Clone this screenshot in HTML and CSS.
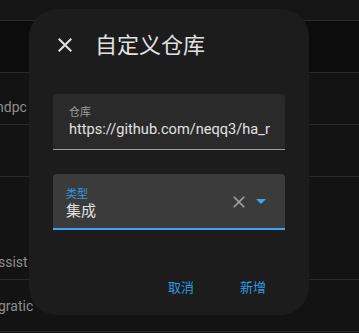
FILE: index.html
```html
<!DOCTYPE html>
<html lang="zh">
<head>
    <meta charset="UTF-8">
    <meta name="viewport" content="width=device-width, initial-scale=1.0">
    <title>自定义仓库</title>
    <link rel="stylesheet" href="styles.css">
</head>
<body>
    <!-- Pàgina de fons -->
    <div class="page">
        <div class="topbar"></div>
        <div class="toolbar"></div>
        <div class="list-row"><span class="row-text">ndpc</span></div>
        <div class="list-row"></div>
        <div class="list-row tall"><span class="row-text">ssist</span></div>
        <div class="list-row"><span class="row-text">gratic</span></div>
    </div>

    <!-- Diàleg -->
    <div class="dialog">
        <div class="dialog-header">
            <button class="icon-btn" type="button">
                <svg viewBox="0 0 24 24" width="24" height="24"><path fill="#e1e1e1" d="M19,6.41L17.59,5L12,10.59L6.41,5L5,6.41L10.59,12L5,17.59L6.41,19L12,13.41L17.59,19L19,17.59L13.41,12L19,6.41Z"/></svg>
            </button>
            <h2 class="dialog-title">自定义仓库</h2>
        </div>

        <div class="field">
            <span class="field-label">仓库</span>
            <span class="field-value">https://github.com/neqq3/ha_node_red_addon</span>
        </div>

        <div class="field select">
            <div class="select-text">
                <span class="field-label">类型</span>
                <span class="field-value">集成</span>
            </div>
            <svg class="clear-icon" viewBox="0 0 24 24" width="20" height="20"><path fill="#9e9e9e" d="M19,6.41L17.59,5L12,10.59L6.41,5L5,6.41L10.59,12L5,17.59L6.41,19L12,13.41L17.59,19L19,17.59L13.41,12L19,6.41Z"/></svg>
            <svg class="arrow-icon" viewBox="0 0 24 24" width="24" height="24"><path fill="#3ca6f2" d="M7 10l5 5 5-5z"/></svg>
        </div>

        <div class="dialog-actions">
            <button class="text-btn" type="button">取消</button>
            <button class="text-btn" type="button">新增</button>
        </div>
    </div>
</body>
</html>
```

FILE: styles.css
```css
:root {
    --primary-color: #2e9be6;
    --line-color: #3ca6f2;
    --text-color: #e1e1e1;
    --muted-color: #9e9e9e;
    --divider: #2b2b2b;
}

body {
    margin: 0;
    background-color: #131313;
    font-family: Roboto, "Noto Sans CJK SC", sans-serif;
    color: var(--text-color);
    overflow: hidden;
}

.page {
    width: 359px;
    height: 333px;
}

.topbar {
    height: 20px;
    background-color: #151515;
    border-bottom: 1px solid var(--divider);
}

.toolbar {
    height: 51px;
    background-color: #0c0c0c;
    border-bottom: 1px solid var(--divider);
}

.list-row {
    height: 51px;
    border-bottom: 1px solid var(--divider);
    display: flex;
    align-items: center;
    position: relative;
}

.list-row.tall {
    height: 102px;
    align-items: flex-end;
}

.row-text {
    font-size: 14px;
    color: #8e8e8e;
    margin-left: -4px;
    position: relative;
    top: 8px;
}

.list-row.tall .row-text {
    top: 0;
    margin-bottom: 9px;
    margin-left: -2px;
}

.list-row:last-child .row-text {
    top: 0;
    margin-left: -2px;
}

.dialog {
    position: absolute;
    left: 29px;
    top: 9px;
    width: 280px;
    height: 306px;
    box-sizing: border-box;
    padding: 24px 24px 0;
    background-color: #1c1c1c;
    border-radius: 28px;
}

.dialog-header {
    display: flex;
    align-items: center;
    height: 24px;
}

.icon-btn {
    background: none;
    border: none;
    padding: 0;
    width: 24px;
    height: 24px;
    display: block;
}

.icon-btn svg {
    display: block;
}

.dialog-title {
    margin: 0 0 0 18px;
    font-family: "Noto Sans CJK SC", sans-serif;
    font-size: 22px;
    font-weight: 400;
    line-height: 24px;
    color: var(--text-color);
    position: relative;
    top: -2px;
}

.field {
    margin-top: 37px;
    height: 56px;
    box-sizing: border-box;
    padding: 0 16px;
    background-color: #2a2a2a;
    border-radius: 4px 4px 0 0;
    border-bottom: 1px solid #9a9a9a;
    display: flex;
    flex-direction: column;
    overflow: hidden;
}

.field-label {
    margin-top: 11px;
    font-family: "Noto Sans CJK SC", sans-serif;
    font-size: 11px;
    line-height: 12px;
    color: var(--muted-color);
}

.field-value {
    margin-top: 3px;
    margin-right: -1px;
    font-size: 14.6px;
    line-height: 18px;
    color: var(--text-color);
    white-space: nowrap;
    overflow: hidden;
}

.select {
    margin-top: 24px;
    padding: 0 12px 0 13px;
    background-color: #3b3b3b;
    border-bottom: 2px solid var(--line-color);
    flex-direction: row;
    align-items: center;
}

.select-text {
    flex: 1;
    display: flex;
    flex-direction: column;
    align-self: stretch;
}

.select .field-label {
    margin-top: 13px;
    color: var(--primary-color);
}

.select .field-value {
    font-family: "Noto Sans CJK SC", sans-serif;
    font-size: 15px;
    margin-top: 2px;
    margin-right: 0;
}

.clear-icon,
.arrow-icon {
    display: block;
    flex-shrink: 0;
}

.clear-icon {
    position: relative;
    top: 1px;
}

.dialog-actions {
    margin-top: 38px;
    display: flex;
    justify-content: flex-end;
    gap: 8px;
}

.text-btn {
    background: none;
    border: none;
    min-width: 64px;
    height: 36px;
    padding: 0 8px;
    font-family: "Noto Sans CJK SC", sans-serif;
    font-size: 13px;
    color: var(--primary-color);
    cursor: pointer;
}
```
